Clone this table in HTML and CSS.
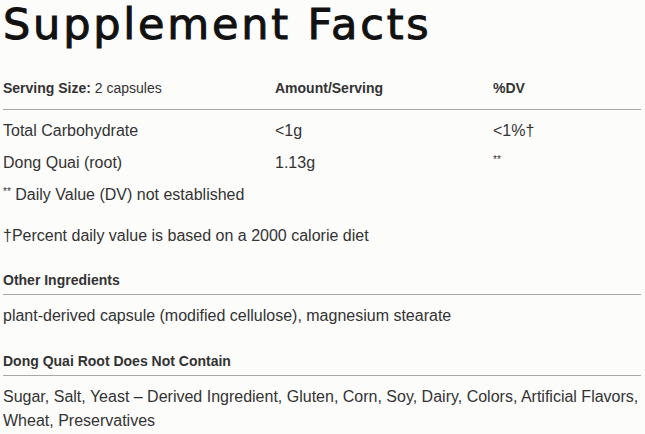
FILE: index.html
```html
<!DOCTYPE html>
<html>
<head>
	<meta charset="utf-8">
	<title>Supplement Facts</title>
	<link rel="stylesheet" href="styles.css">
</head>
<body>
	<div id="facts">
		<h1 class="title">Supplement Facts</h1>
		<div class="row head">
			<div class="col1"><b>Serving Size:</b> 2 capsules</div>
			<div class="col2"><b>Amount/Serving</b></div>
			<div class="col3"><b>%DV</b></div>
		</div>
		<div class="row item first">
			<div class="col1">Total Carbohydrate</div>
			<div class="col2">&lt;1g</div>
			<div class="col3">&lt;1%†</div>
		</div>
		<div class="row item">
			<div class="col1">Dong Quai (root)</div>
			<div class="col2">1.13g</div>
			<div class="col3"><span class="small">**</span></div>
		</div>
		<p class="note"><span class="small">**</span> Daily Value (DV) not established</p>
		<p class="note pct">†Percent daily value is based on a 2000 calorie diet</p>

		<div class="section other">Other Ingredients</div>
		<p class="text">plant-derived capsule (modified cellulose), magnesium stearate</p>

		<div class="section free">Dong Quai Root Does Not Contain</div>
		<p class="text">Sugar, Salt, Yeast – Derived Ingredient, Gluten, Corn, Soy, Dairy, Colors, Artificial Flavors, Wheat, Preservatives</p>
	</div>
</body>
</html>
```

FILE: styles.css
```css
body{
	margin:0px;
	background-color:#fcfcfb;
	color:#333333;
	font-family:"Liberation Sans", Arial, sans-serif;
}
#facts{
	padding:0px 4px 0px 3px;
}
.title{
	font-family:"DejaVu Sans", sans-serif;
	font-weight:normal;
	font-size:43px;
	letter-spacing:2.8px;
	color:#111111;
	margin:0px;
	height:69px;
	line-height:48px;
	-webkit-text-stroke:1px #111111;
}
.row{
	display:flex;
}
.col1{
	width:272px;
}
.col2{
	width:218px;
}
.head{
	font-size:14px;
	padding:11px 0px 13px 0px;
	border-bottom:1px solid #a8a8a8;
}
.item{
	font-size:16px;
	height:32px;
	line-height:32px;
}
.first{
	margin-top:5px;
}
.small{
	font-size:10px;
	vertical-align:top;
	line-height:26px;
}
.note{
	font-size:16px;
	margin:0px;
	line-height:32px;
}
.pct{
	margin-top:9px;
}
.section{
	font-size:14px;
	font-weight:bold;
	line-height:16px;
	padding-bottom:6px;
	border-bottom:1px solid #a8a8a8;
}
.other{
	margin-top:20px;
}
.free{
	margin-top:25px;
}
.text{
	font-size:16px;
	line-height:24px;
	margin:9px 0px 0px 0px;
}
```
